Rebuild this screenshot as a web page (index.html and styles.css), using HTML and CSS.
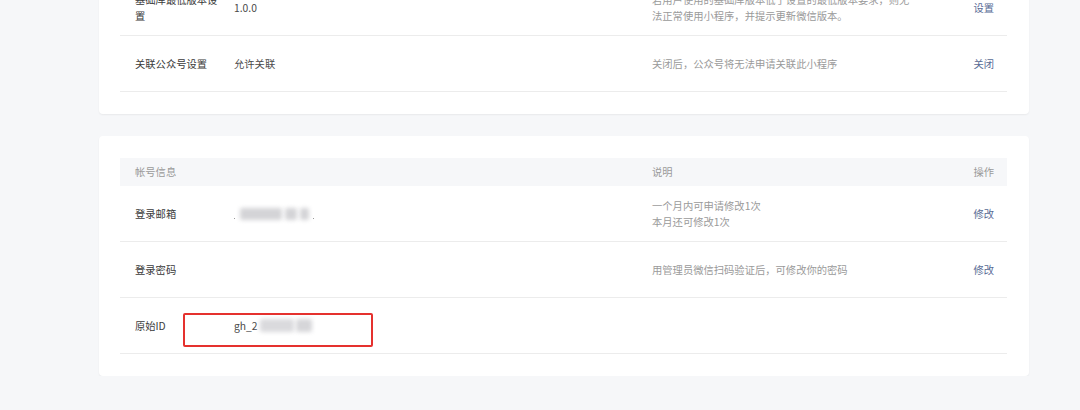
FILE: index.html
```html
<!DOCTYPE html>
<html lang="zh-CN">
<head>
<meta charset="utf-8">
<title>设置</title>
<link rel="stylesheet" href="styles.css">
</head>
<body>
<div class="page">
  <section class="card card-top">
    <div class="row">
      <div class="label">基础库最低版本设置</div>
      <div class="value">1.0.0</div>
      <div class="desc">若用户使用的基础库版本低于设置的最低版本要求，则无法正常使用小程序，并提示更新微信版本。</div>
      <div class="action"><a class="link">设置</a></div>
    </div>
    <div class="row">
      <div class="label">关联公众号设置</div>
      <div class="value">允许关联</div>
      <div class="desc">关闭后，公众号将无法申请关联此小程序</div>
      <div class="action"><a class="link">关闭</a></div>
    </div>
  </section>

  <section class="card card-account">
    <div class="row head">
      <div class="label">帐号信息</div>
      <div class="value"></div>
      <div class="desc">说明</div>
      <div class="action">操作</div>
    </div>
    <div class="row">
      <div class="label">登录邮箱</div>
      <div class="value">
        <span class="masked">
          <span class="dot"></span>
          <span class="blur b1"></span>
          <span class="blur b2"></span>
          <span class="blur b3"></span>
          <span class="dot"></span>
        </span>
      </div>
      <div class="desc">一个月内可申请修改1次<br>本月还可修改1次</div>
      <div class="action"><a class="link">修改</a></div>
    </div>
    <div class="row">
      <div class="label">登录密码</div>
      <div class="value"></div>
      <div class="desc">用管理员微信扫码验证后，可修改你的密码</div>
      <div class="action"><a class="link">修改</a></div>
    </div>
    <div class="row row-id">
      <div class="label">原始ID</div>
      <div class="value">
        <span class="id-text">gh_2</span><span class="masked id-mask"><span class="blur b4"></span><span class="blur b5"></span></span>
      </div>
      <div class="desc"></div>
      <div class="action"></div>
      <div class="highlight"></div>
    </div>
  </section>
</div>
</body>
</html>
```

FILE: styles.css
```css
html, body {
  margin: 0;
  padding: 0;
  background: #f6f7f9;
  font-family: "Noto Sans CJK SC", "Noto Sans", "Liberation Sans", sans-serif;
  font-size: 10.3px;
  color: #3a3a3a;
  overflow: hidden;
}

.page {
  display: flex;
  flex-direction: column;
  gap: 22px;
  width: 930px;
  margin-left: 99px;
}

.card {
  background: #ffffff;
  border-radius: 4px;
  box-shadow: 0 1px 2px rgba(0, 0, 0, 0.06);
  padding: 22px 22px 22px 21px;
}

.card-top {
  margin-top: -20px;
  padding-top: 0;
  border-top-left-radius: 0;
  border-top-right-radius: 0;
}

.row {
  position: relative;
  display: grid;
  grid-template-columns: 99px 418px 262px 1fr;
  align-items: center;
  height: 56px;
  box-sizing: border-box;
  padding: 0 13px 0 15px;
  border-bottom: 1px solid #ececec;
  line-height: 16px;
}

.row.head {
  height: 28px;
  background: #f6f7f9;
  border-bottom: none;
  color: #9a9a9a;
}

.row.head .desc,
.row.head .action {
  color: #9a9a9a;
}

.label {
  padding-right: 12px;
}

.value {
  color: #4a4a4a;
  display: flex;
  align-items: center;
}

.desc {
  color: #9a9a9a;
}

.action {
  justify-self: end;
}

.link {
  color: #576b95;
  text-decoration: none;
}

.masked {
  display: inline-flex;
  align-items: center;
  gap: 3px;
  height: 14px;
}

.dot {
  width: 1px;
  height: 1px;
  background: #9a9a9a;
  align-self: flex-end;
  margin-bottom: 2px;
}

.blur {
  display: inline-block;
  height: 12px;
  background: #d4d4d7;
  filter: blur(2.2px);
  border-radius: 2px;
}

.b1 { width: 42px; margin-left: 2px; }
.b2 { width: 12px; }
.b3 { width: 9px; margin-right: 1px; }

.id-text {
  color: #4a4a4a;
}

.id-mask {
  margin-left: 2px;
  gap: 2px;
}

.b4 { width: 34px; height: 13px; background: #dadadd; }
.b5 { width: 16px; height: 13px; background: #d6d6d9; }

.highlight {
  position: absolute;
  left: 63px;
  top: 15px;
  width: 190px;
  height: 34px;
  box-sizing: border-box;
  border: 2px solid #e5312e;
  border-radius: 2px;
  pointer-events: none;
}
```
